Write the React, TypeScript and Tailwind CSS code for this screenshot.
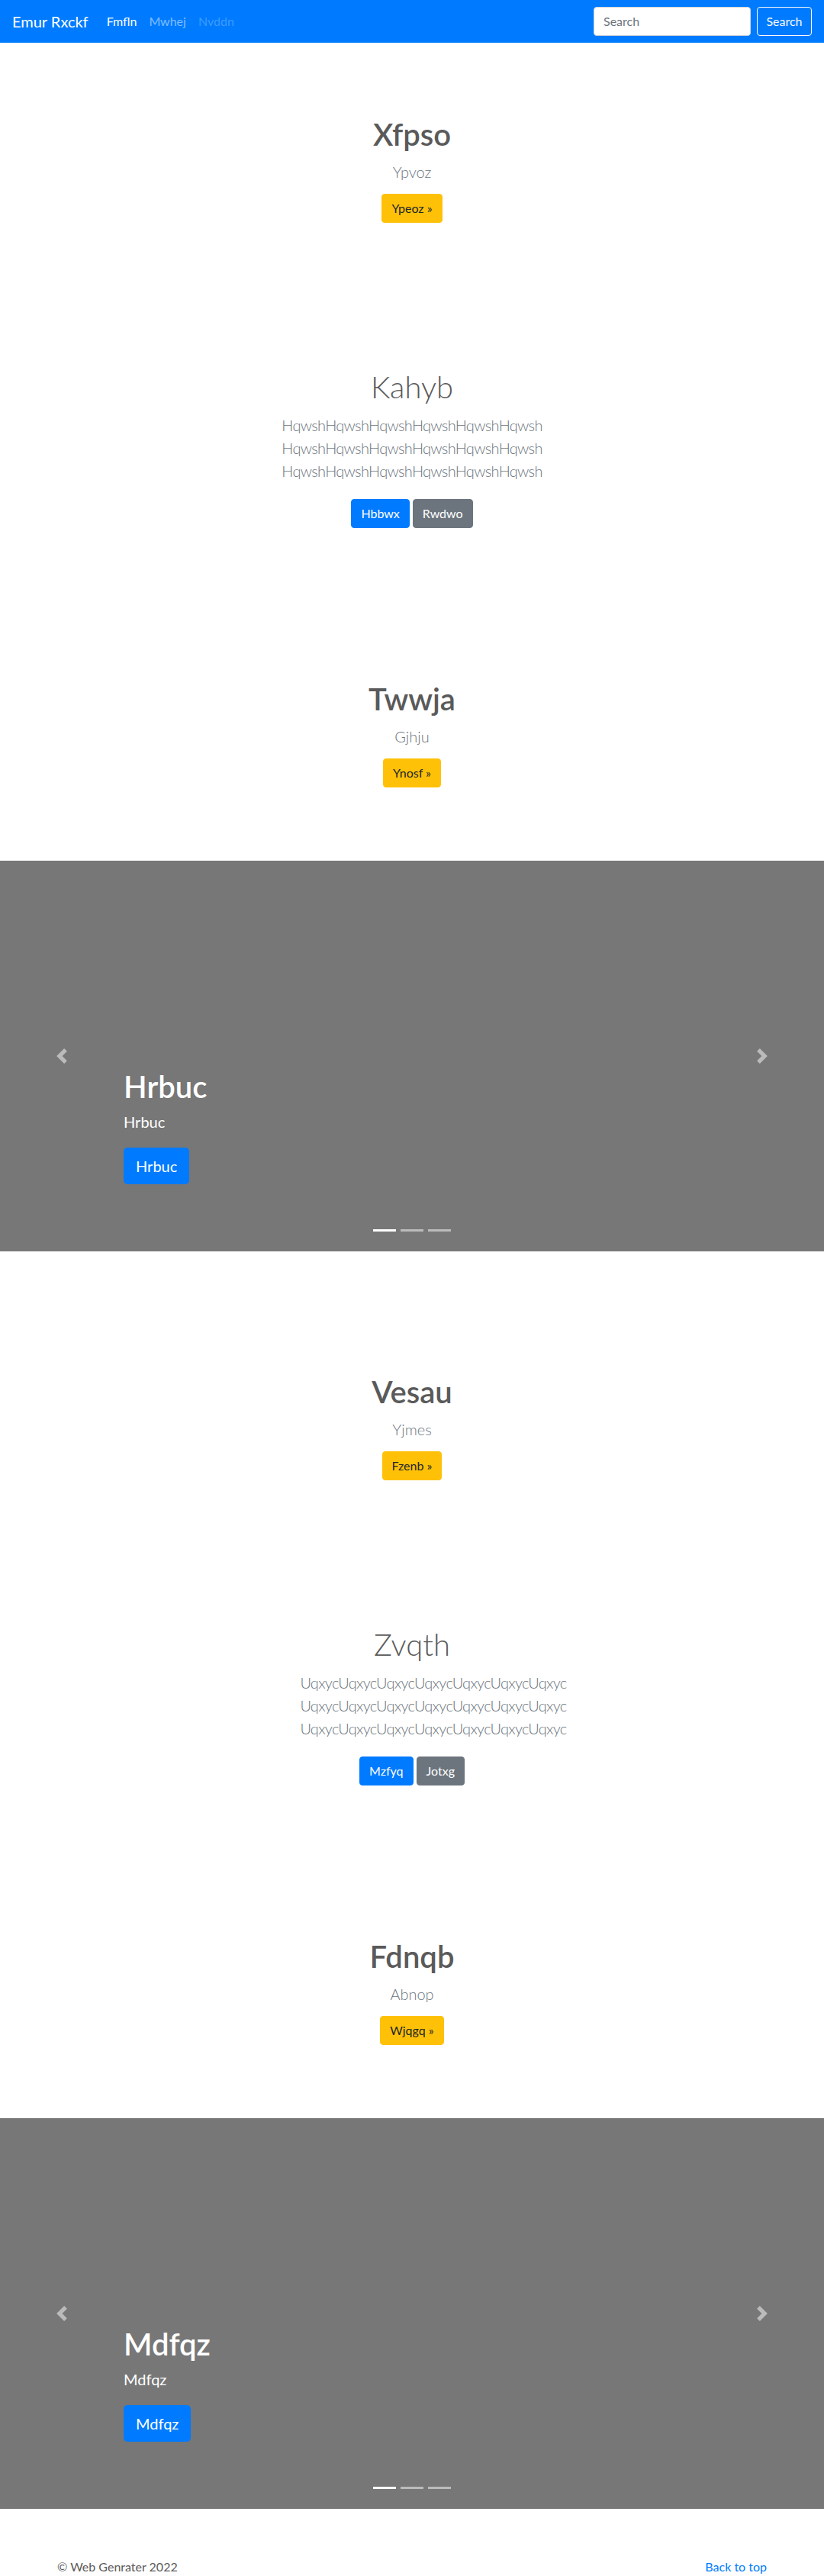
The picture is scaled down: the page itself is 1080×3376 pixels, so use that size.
import React from "react";

const FONT = { fontFamily: "Lato, 'Open Sans', sans-serif" };

function Navbar() {
  return (
    <nav className="h-[56px] bg-[#007bff] flex items-center px-4">
      <span className="text-[20px] leading-[30px] text-white mr-4">Emur Rxckf</span>
      <div className="flex items-center text-[16px] leading-[24px]">
        <span className="px-2 text-white">Fmfln</span>
        <span className="px-2 text-white/50">Mwhej</span>
        <span className="px-2 text-white/25">Nvddn</span>
      </div>
      <div className="ml-auto flex items-center">
        <div className="w-[206px] h-[38px] bg-white rounded-[4px] border border-[#ced4da] flex items-center px-3 text-[16px] text-[#6c757d] mr-2">
          Search
        </div>
        <div className="h-[38px] w-[72px] rounded-[4px] border border-[#f8f9fa] flex items-center justify-center text-[16px] text-[#f8f9fa]">
          Search
        </div>
      </div>
    </nav>
  );
}

function Btn({ children, color }: { children: React.ReactNode; color: "warning" | "primary" | "secondary" }) {
  const cls =
    color === "warning"
      ? "bg-[#ffc107] border-[#ffc107] text-[#212529]"
      : color === "primary"
      ? "bg-[#007bff] border-[#007bff] text-white"
      : "bg-[#6c757d] border-[#6c757d] text-white";
  return (
    <span className={`inline-flex items-center h-[38px] px-3 rounded-[4px] border text-[16px] leading-[24px] ${cls}`}>
      {children}
    </span>
  );
}

type GroupData = {
  a: { h: string; s: string; b: string };
  b: { h: string; lines: string[]; b1: string; b2: string; shift: boolean };
  c: { h: string; s: string; b: string };
};

function Group({ d }: { d: GroupData }) {
  return (
    <section className="flex flex-col items-center text-center pt-[96px] pb-[96px] text-[#5a5a5a]">
      <h1 className="text-[40px] leading-[48px] font-semibold">{d.a.h}</h1>
      <p className="mt-[10px] text-[20px] leading-[30px] font-light text-[#6c757d]">{d.a.s}</p>
      <div className="mt-[14px]">
        <Btn color="warning">{d.a.b} &raquo;</Btn>
      </div>

      <h1 className="mt-[191px] text-[40px] leading-[48px] font-light">{d.b.h}</h1>
      <div
        className={`mt-[11px] text-[20px] leading-[30px] font-light tracking-[-0.7px] text-[#6c757d] ${
          d.b.shift ? "ml-[56px]" : ""
        }`}
      >
        {d.b.lines.map((l, i) => (
          <div key={i}>{l}</div>
        ))}
      </div>
      <div className="mt-[22px] flex gap-[4px]">
        <Btn color="primary">{d.b.b1}</Btn>
        <Btn color="secondary">{d.b.b2}</Btn>
      </div>

      <h1 className="mt-[200px] text-[40px] leading-[48px] font-semibold">{d.c.h}</h1>
      <p className="mt-[10px] text-[20px] leading-[30px] font-light text-[#6c757d]">{d.c.s}</p>
      <div className="mt-[14px]">
        <Btn color="warning">{d.c.b} &raquo;</Btn>
      </div>
    </section>
  );
}

function Carousel({ t }: { t: string }) {
  return (
    <div className="relative h-[512px] bg-[#777777] flex flex-col justify-end pl-[162px] pr-[162px] pb-[88px] text-white mb-[64px]">
      <h1 className="text-[40px] leading-[48px] font-semibold">{t}</h1>
      <p className="mt-[8px] text-[20px] leading-[28px]">{t}</p>
      <div className="mt-[20px]">
        <span className="inline-flex items-center h-[48px] px-4 rounded-[5px] bg-[#007bff] text-white text-[20px] leading-[30px]">
          {t}
        </span>
      </div>
      <div className="absolute left-0 top-0 bottom-0 w-[162px] flex items-center justify-center opacity-50">
        <svg width="20" height="20" viewBox="0 0 8 8" fill="#fff">
          <path d="M5.25 0l-4 4 4 4 1.5-1.5L4.25 4l2.5-2.5L5.25 0z" />
        </svg>
      </div>
      <div className="absolute right-0 top-0 bottom-0 w-[162px] flex items-center justify-center opacity-50">
        <svg width="20" height="20" viewBox="0 0 8 8" fill="#fff">
          <path d="M2.75 0l-1.5 1.5L3.75 4l-2.5 2.5L2.75 8l4-4-4-4z" />
        </svg>
      </div>
      <div className="absolute left-0 right-0 bottom-[26px] flex justify-center gap-[6px]">
        <span className="w-[30px] h-[3px] bg-white" />
        <span className="w-[30px] h-[3px] bg-white/50" />
        <span className="w-[30px] h-[3px] bg-white/50" />
      </div>
    </div>
  );
}

const g1: GroupData = {
  a: { h: "Xfpso", s: "Ypvoz", b: "Ypeoz" },
  b: {
    h: "Kahyb",
    lines: Array(3).fill("Hqwsh".repeat(6)),
    b1: "Hbbwx",
    b2: "Rwdwo",
    shift: false,
  },
  c: { h: "Twwja", s: "Gjhju", b: "Ynosf" },
};

const g2: GroupData = {
  a: { h: "Vesau", s: "Yjmes", b: "Fzenb" },
  b: {
    h: "Zvqth",
    lines: Array(3).fill("Uqxyc".repeat(7)),
    b1: "Mzfyq",
    b2: "Jotxg",
    shift: true,
  },
  c: { h: "Fdnqb", s: "Abnop", b: "Wjqgq" },
};

export default function App() {
  return (
    <div style={FONT} className="bg-white w-[1080px]">
      <Navbar />
      <Group d={g1} />
      <Carousel t="Hrbuc" />
      <Group d={g2} />
      <Carousel t="Mdfqz" />
      <footer className="px-[75px] flex justify-between text-[16px] leading-[24px] text-[#5a5a5a]">
        <span>© Web Genrater 2022</span>
        <span className="text-[#007bff]">Back to top</span>
      </footer>
    </div>
  );
}
